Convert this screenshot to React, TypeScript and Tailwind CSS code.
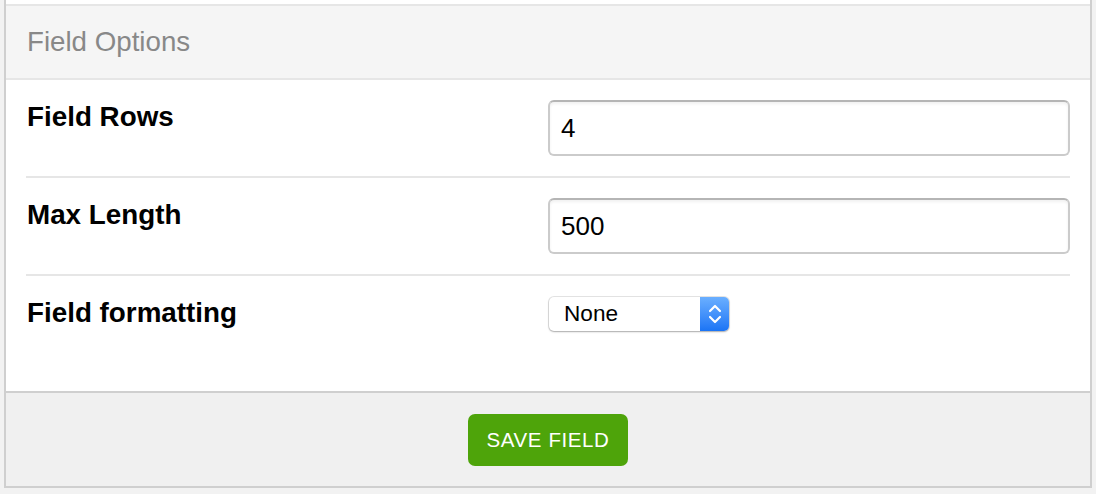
import React from 'react';

const font = { fontFamily: '"Liberation Sans", Arial, Helvetica, sans-serif' };

function FieldRow({ label, children, last = false }: { label: string; children: React.ReactNode; last?: boolean }) {
  return (
    <div className={`grid grid-cols-2 pt-[20px] ${last ? 'pb-[60px]' : 'pb-[20px] border-b-2 border-[#e6e6e6]'}`}>
      <div className="text-[27.8px] leading-[34px] font-bold text-black pl-[1px]">{label}</div>
      <div>{children}</div>
    </div>
  );
}

function TextInput({ value }: { value: string }) {
  return (
    <div className="h-[56px] w-full rounded-[6px] border-2 border-[#cbcbcb] border-t-[#b5b5b5] bg-white shadow-[inset_0_2px_3px_rgba(0,0,0,0.06)] flex items-center pl-[11px] text-[26px] text-black">
      {value}
    </div>
  );
}

function MacSelect({ value }: { value: string }) {
  return (
    <div className="h-[34px] w-[180px] ml-[1px] flex rounded-[5px] bg-white shadow-[0_0_0_1px_rgba(0,0,0,0.1),0_1px_2px_rgba(0,0,0,0.25)] overflow-hidden">
      <div className="flex-1 flex items-center pl-[15px] text-[22.6px] text-black">{value}</div>
      <div className="w-[29px] flex items-center justify-center bg-gradient-to-b from-[#6aafff] to-[#1a74f5]">
        <svg width="16" height="24" viewBox="0 0 16 24" fill="none" stroke="white" strokeWidth="2.2" strokeLinecap="round" strokeLinejoin="round">
          <path d="M3 9 L8 4 L13 9" />
          <path d="M3 15 L8 20 L13 15" />
        </svg>
      </div>
    </div>
  );
}

export default function App() {
  return (
    <div className="w-[1096px] h-[494px] bg-[#f2f2f2] px-[4px] pb-[6px]" style={font}>
      <div className="h-full flex flex-col border-x-2 border-b-2 border-[#cfcfcf] bg-white">
        <div className="h-[4px] bg-white" />
        <div className="h-[76px] bg-[#f5f5f5] border-y-2 border-[#e6e6e6] flex items-center pl-[21px] text-[27.7px] text-[#888888]">
          Field Options
        </div>
        <div className="px-[20px]">
          <FieldRow label="Field Rows">
            <TextInput value="4" />
          </FieldRow>
          <FieldRow label="Max Length">
            <TextInput value="500" />
          </FieldRow>
          <FieldRow label="Field formatting" last>
            <div className="pt-[1px]">
              <MacSelect value="None" />
            </div>
          </FieldRow>
        </div>
        <div className="flex-1 bg-[#f0f0f0] border-t-2 border-[#cfcfcf] flex justify-center pt-[21px]">
          <button className="h-[52px] w-[160px] rounded-[7px] bg-[#4ea40a] text-white text-[20.5px] tracking-[0.6px]">
            SAVE FIELD
          </button>
        </div>
      </div>
    </div>
  );
}
